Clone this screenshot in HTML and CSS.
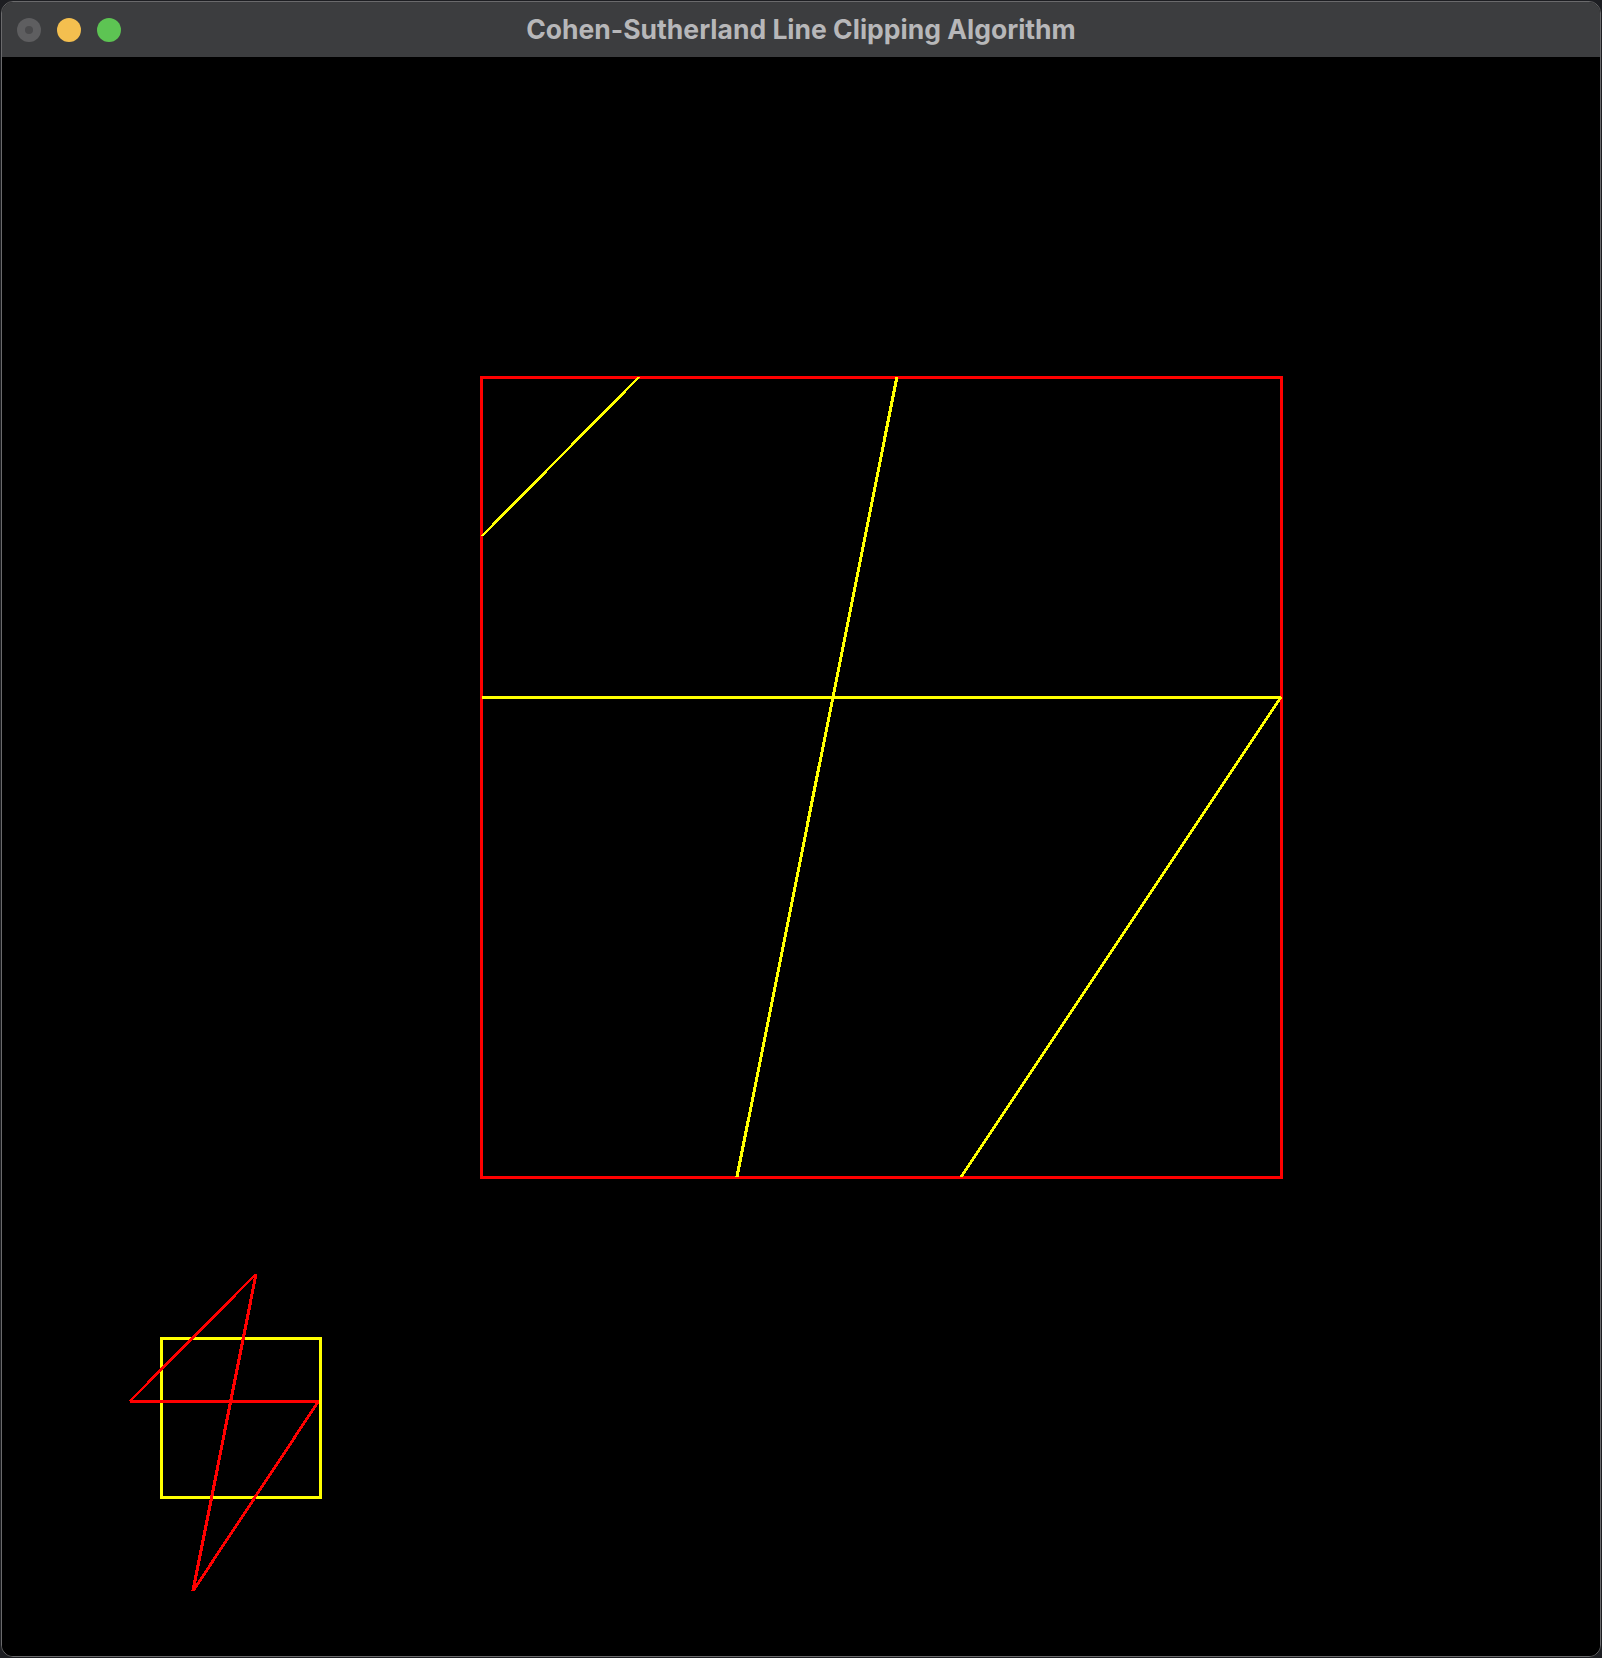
FILE: index.html
```html
<!DOCTYPE html>
<html>
<head>
<meta charset="utf-8">
<title>Cohen-Sutherland Line Clipping Algorithm</title>
<link rel="stylesheet" href="styles.css">
</head>
<body>
<div class="window">
  <div class="titlebar">
    <div class="lights">
      <span class="light close"><span class="dot"></span></span>
      <span class="light min"></span>
      <span class="light max"></span>
    </div>
    <div class="title">Cohen-Sutherland Line Clipping Algorithm</div>
  </div>
  <div class="canvas">
    <svg class="scene" width="1598" height="1598" viewBox="2 57 1598 1598" shape-rendering="crispEdges">
      <!-- viewport (clipped result) -->
      <g class="red w3">
        <line x1="480" y1="377.5" x2="1282.5" y2="377.5"/>
        <line x1="481.5" y1="376" x2="481.5" y2="1179"/>
        <line x1="1281.5" y1="376" x2="1281.5" y2="1179"/>
        <line x1="480" y1="1177.5" x2="1283" y2="1177.5"/>
      </g>
      <g class="yellow">
        <line class="w21" x1="482" y1="536" x2="639" y2="377"/>
        <line class="w29" x1="897" y1="377" x2="737" y2="1177"/>
        <line class="w3" x1="482" y1="697.5" x2="1281" y2="697.5"/>
        <line class="w25" x1="1281" y1="697" x2="961" y2="1177"/>
      </g>
      <!-- window (original lines) -->
      <g class="yellow w3">
        <rect x="161.5" y="1338.5" width="159" height="159" fill="none"/>
      </g>
      <g class="red">
        <line class="w21" x1="130" y1="1401" x2="256" y2="1274"/>
        <line class="w29" x1="256" y1="1274" x2="193" y2="1591"/>
        <line class="w3" x1="130" y1="1401.5" x2="319" y2="1401.5"/>
        <line class="w25" x1="318" y1="1402" x2="193" y2="1591"/>
      </g>
    </svg>
  </div>
</div>
</body>
</html>
```

FILE: styles.css
```css
html, body {
  margin: 0;
  padding: 0;
  background: #1d1e22;
}
body {
  width: 1602px;
  height: 1658px;
  overflow: hidden;
}
.window {
  margin: 1px;
  width: 1598px;
  height: 1654px;
  border: 1px solid #6a6a6c;
  border-radius: 12px;
  overflow: hidden;
  background: #000;
  display: flex;
  flex-direction: column;
}
.titlebar {
  height: 55px;
  flex: none;
  background: #3c3d3f;
  position: relative;
  display: flex;
  align-items: center;
  justify-content: center;
}
.lights {
  position: absolute;
  left: 15px;
  top: 16px;
  display: flex;
  gap: 16px;
}
.light {
  width: 24px;
  height: 24px;
  border-radius: 50%;
  display: flex;
  align-items: center;
  justify-content: center;
}
.close { background: #5e5e60; }
.close .dot {
  width: 8px;
  height: 8px;
  border-radius: 50%;
  background: #4a4a4c;
}
.min { background: #f4bf4f; }
.max { background: #5dc453; }
.title {
  font-family: Inter, Roboto, "Liberation Sans", sans-serif;
  font-weight: 700;
  font-size: 26.5px;
  color: #b7b7b9;
  margin-top: -2px;
  letter-spacing: 0;
}
.canvas {
  flex: 1;
  background: #000;
}
.scene {
  display: block;
}
.red { stroke: #ff0000; }
.yellow { stroke: #ffff00; }
.w3 { stroke-width: 3; }
.w29 { stroke-width: 3.1; }
.w25 { stroke-width: 2.8; }
.w21 { stroke-width: 2.6; }
```
